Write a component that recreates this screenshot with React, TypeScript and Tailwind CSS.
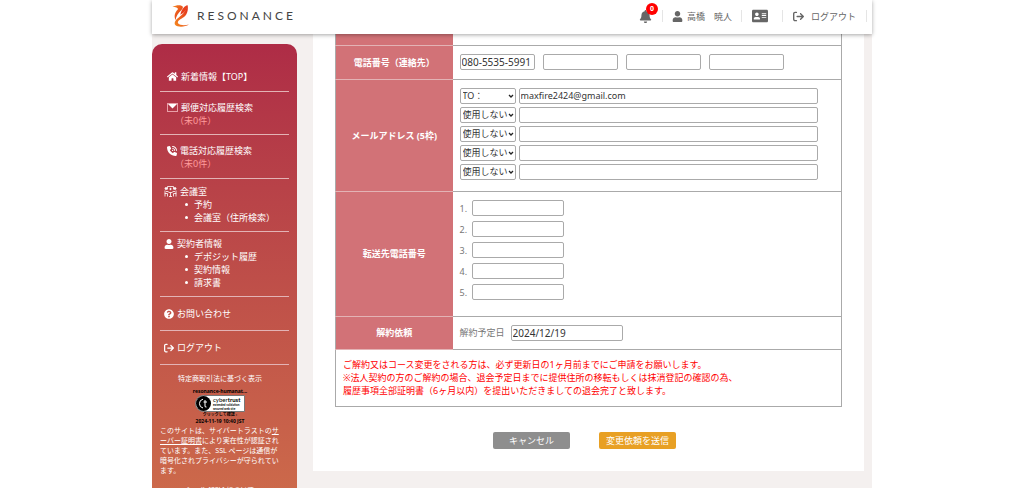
import type { ReactNode } from "react"
import { FaAddressCard, FaBell, FaHome, FaQuestionCircle, FaUser } from "react-icons/fa"
import { FaArrowRightFromBracket, FaPhoneVolume } from "react-icons/fa6"

const subLinks = {
  meeting: ["予約", "会議室（住所検索）"],
  contractor: ["デポジット履歴", "契約情報", "請求書"],
}

const mails = [
  { type: "TO：", address: "maxfire2424@gmail.com" },
  { type: "使用しない", address: "" },
  { type: "使用しない", address: "" },
  { type: "使用しない", address: "" },
  { type: "使用しない", address: "" },
]

const inputClass = "h-4 rounded-xs border border-[#aaa] bg-white text-[#333]"

function Logo() {
  return (
    <a href="#" className="flex items-center gap-[7px]" aria-label="RESONANCE">
      <svg width="18" height="22" viewBox="0 0 52 64">
        <defs>
          <linearGradient id="flameTop" x1="0" y1="0" x2="1" y2="1">
            <stop offset="0" stopColor="#f58a1f" />
            <stop offset="1" stopColor="#e0261c" />
          </linearGradient>
          <linearGradient id="flameBottom" x1="1" y1="0" x2="0" y2="1">
            <stop offset="0" stopColor="#e0261c" />
            <stop offset="1" stopColor="#f58a1f" />
          </linearGradient>
        </defs>
        <path d="M1 6C10 1 20 0 27 2C34 4 32 10 26 16C18 24 12 32 10 44C5 32 8 22 16 14C20 10 12 5 1 6Z" fill="url(#flameTop)" />
        <path d="M45 0C48 16 44 30 30 38C22 43 14 48 18 54C23 60 38 60 49 57C40 63 26 64 16 62C4 59 6 48 15 40C28 30 40 20 45 0Z" fill="url(#flameBottom)" />
        <path d="M45 1C36 2 27 14 24 28C34 24 44 16 45 1Z" fill="#e8401c" />
      </svg>
      <span className="font-[Lato] text-[12px] leading-4 tracking-[3px] text-[#444]">RESONANCE</span>
    </a>
  )
}

function Header() {
  return (
    <header className="relative z-10 flex h-[34px] shrink-0 items-center bg-white pr-[5px] pb-[2px] pl-5 text-[#666] shadow-[0_1px_4px_rgba(0,0,0,0.35)]">
      <Logo />
      <div className="ml-auto flex items-center">
        <button className="relative mr-[10px]" aria-label="お知らせ">
          <FaBell size={13} />
          <span className="absolute -top-[7px] left-[7px] flex size-3 items-center justify-center rounded-full bg-[#f00] text-[7px] leading-3 font-bold text-white">
            0
          </span>
        </button>
        <a href="#" className="flex h-3 items-center gap-1 border-l border-[#e5e5e5] px-[9px]">
          <FaUser size={11} />
          高橋　暁人
        </a>
        <a href="#" className="flex h-3 items-center border-l border-[#e5e5e5] px-[10px]" aria-label="会員証">
          <FaAddressCard size={16} />
        </a>
        <a href="#" className="ml-1 flex h-3 items-center gap-[7px] border-x border-[#e5e5e5] px-[10px]">
          <FaArrowRightFromBracket size={11} />
          ログアウト
        </a>
      </div>
    </header>
  )
}

function MailIcon() {
  return (
    <svg width="11" height="9" viewBox="0 0 11 9" fill="none">
      <rect x=".5" y=".5" width="10" height="8" stroke="#e8a0a8" />
      <path d="M1 1h9L5.500 5.500Z" fill="#fff" />
    </svg>
  )
}

function MeetingIcon() {
  return (
    <svg width="13" height="11" viewBox="0 0 13 11" fill="none" stroke="#fff" strokeWidth=".8">
      <path d="M3.500 3.500V.5h6v3" />
      <circle cx="2" cy="2.500" r="1" fill="#fff" />
      <circle cx="11" cy="2.500" r="1" fill="#fff" />
      <circle cx="6.500" cy="3" r=".7" fill="#fff" />
      <path d="M1 4.500v3h2.500V10.500M12 4.500v3H9.500V10.500M1 7v3.500M12 7v3.500M2 5.500h2.500M11 5.500H8.500M4.500 6.500h4M6.500 6.500v4M5 10.500h3" />
    </svg>
  )
}

function SubMenu({ items }: { items: string[] }) {
  return (
    <ul className="pl-[21px]">
      {items.map((item) => (
        <li key={item} className="flex items-center gap-[6px] before:size-[3px] before:rounded-full before:bg-white">
          <a href="#">{item}</a>
        </li>
      ))}
    </ul>
  )
}

function MenuTitle({ icon, children }: { icon: ReactNode; children: ReactNode }) {
  return (
    <a href="#" className="flex items-center gap-[3px]">
      {icon}
      {children}
    </a>
  )
}

function TrustSeal() {
  return (
    <div className="mx-auto mb-[2px] flex w-[54px] flex-col items-center text-black">
      <span className="text-[5px] leading-[7px] font-bold whitespace-nowrap">resonance-humanat...</span>
      <div className="flex h-[17px] w-[50px] items-center gap-[2px] rounded-l-full border border-[#777] bg-white">
        <svg width="15" height="15" viewBox="0 0 15 15" className="shrink-0">
          <circle cx="7.500" cy="7.500" r="7.500" fill="#000" />
          <path d="M7 3.200A4.500 4.500 0 0 0 7 12M9 4v6q0 1.500 1.500 1M7.500 6h3.500" fill="none" stroke="#fff" />
        </svg>
        <div className="font-[Lato] whitespace-nowrap">
          <div className="text-[6px] leading-[7px]">
            cyber<b>trust</b>
          </div>
          <div className="text-[3px] leading-[4px] font-bold">
            extended validation
            <br />
            secured web site
          </div>
        </div>
      </div>
      <span className="text-[4px] leading-[6px] font-bold whitespace-nowrap">クリックして確認 ›</span>
      <span className="text-[5px] leading-[6px] font-bold whitespace-nowrap">2024-11-19 10:40 JST</span>
    </div>
  )
}

function Sidebar() {
  return (
    <aside className="mt-[10px] h-[720px] w-[145px] shrink-0 rounded-t-[10px] bg-linear-to-b from-[#ae2c46] to-[#dd8a4a] px-2 text-white">
      <nav className="divide-y divide-[#e3b3b5] border-b border-[#e3b3b5] leading-[13px]">
        <div className="px-[7px] pt-[26px] pb-2">
          <MenuTitle icon={<FaHome size={11} />}>新着情報【TOP】</MenuTitle>
        </div>
        <div className="px-[7px] pt-[9px] pb-[7px]">
          <MenuTitle icon={<MailIcon />}>郵便対応履歴検索</MenuTitle>
          <p className="pl-2 text-[#ff9c9c]">（未0件）</p>
        </div>
        <div className="px-[7px] pt-[9px] pb-2">
          <MenuTitle icon={<FaPhoneVolume size={10} />}>電話対応履歴検索</MenuTitle>
          <p className="pl-2 text-[#ff9c9c]">（未0件）</p>
        </div>
        <div className="pt-[6px] pb-[7px] pl-1">
          <MenuTitle icon={<MeetingIcon />}>会議室</MenuTitle>
          <SubMenu items={subLinks.meeting} />
        </div>
        <div className="pt-[5px] pb-[7px] pl-1">
          <MenuTitle icon={<FaUser size={10} />}>契約者情報</MenuTitle>
          <SubMenu items={subLinks.contractor} />
        </div>
        <div className="py-[10px] pl-1">
          <MenuTitle icon={<FaQuestionCircle size={10} />}>お問い合わせ</MenuTitle>
        </div>
        <div className="py-[10px] pl-1">
          <MenuTitle icon={<FaArrowRightFromBracket size={10} />}>ログアウト</MenuTitle>
        </div>
      </nav>
      <div className="pt-[9px] pr-[9px] text-[7px] leading-[10px]">
        <p className="mb-1 text-center">
          <a href="#">特定商取引法に基づく表示</a>
        </p>
        <TrustSeal />
        <p>
          このサイトは、サイバートラストの
          <a href="#" className="underline">
            サーバー証明書
          </a>
          により実在性が認証されています。また、SSL ページは通信が暗号化されプライバシーが守られています。
        </p>
        <p className="pt-[9px] text-center">シール [SSL] について</p>
      </div>
    </aside>
  )
}

function Row({ title, children }: { title: string; children: ReactNode }) {
  return (
    <tr className="border-b border-[#aaa]">
      <th scope="row" className="w-[117px] border-b border-[#e3b3b5] bg-[#d27277] text-center font-bold text-white">
        {title}
      </th>
      <td className="px-[7px] py-2">{children}</td>
    </tr>
  )
}

function ContractForm() {
  return (
    <form className="bg-white px-[22px] pb-[22px]">
      <table className="w-full border-collapse border border-t-0 border-[#aaa]">
        <tbody>
          <tr className="h-[11px] border-b border-[#aaa]">
            <th className="border-b border-[#e3b3b5] bg-[#d27277]" />
            <td />
          </tr>
          <Row title="電話番号（連絡先）">
            <div className="flex h-[17px] items-center gap-2">
              {["080-5535-5991", "", "", ""].map((tel, i) => (
                <input key={i} aria-label={`電話番号${i + 1}`} defaultValue={tel} className={`${inputClass} w-[75px] px-px text-[10px]`} />
              ))}
            </div>
          </Row>
          <Row title="メールアドレス (5枠)">
            <div className="flex flex-col gap-[3px] pb-[3px]">
              {mails.map((mail, i) => (
                <div key={i} className="flex gap-[3px]">
                  <div className="relative">
                    <select aria-label={`種別${i + 1}`} defaultValue={mail.type} className={`${inputClass} w-14 appearance-none px-[2px]`}>
                      <option>{mail.type}</option>
                    </select>
                    <svg className="pointer-events-none absolute top-[6px] right-[2px]" width="6" height="5" viewBox="0 0 6 5">
                      <path d="M1 1l2 2 2-2" fill="none" stroke="#222" strokeWidth="1.300" />
                    </svg>
                  </div>
                  <input type="email" aria-label={`メールアドレス${i + 1}`} defaultValue={mail.address} className={`${inputClass} mr-4 flex-1 px-px`} />
                </div>
              ))}
            </div>
          </Row>
          <Row title="転送先電話番号">
            <div className="flex flex-col gap-1 pb-[7px]">
              {[1, 2, 3, 4, 5].map((n) => (
                <label key={n} className="flex h-[17px] items-center">
                  <span className="w-3">{n}.</span>
                  <input className={`${inputClass} w-[92px] px-px`} />
                </label>
              ))}
            </div>
          </Row>
          <Row title="解約依頼">
            <label className="flex items-center gap-[6px]">
              解約予定日
              <input defaultValue="2024/12/19" className={`${inputClass} w-28 px-px text-[10px]`} />
            </label>
          </Row>
          <tr>
            <td colSpan={2} className="px-[7px] pt-2 pb-[9px] text-[#f00]">
              ご解約又はコース変更をされる方は、必ず更新日の1ヶ月前までにご申請をお願いします。
              <br />
              ※法人契約の方のご解約の場合、退会予定日までに提供住所の移転もしくは抹消登記の確認の為、
              <br />
              履歴事項全部証明書（6ヶ月以内）を提出いただきましての退会完了と致します。
            </td>
          </tr>
        </tbody>
      </table>
      <div className="mt-[25px] flex justify-center gap-[29px] pr-2 text-white">
        <button type="button" className="h-[17px] w-[77px] rounded-xs bg-[#8e8e8e]">
          キャンセル
        </button>
        <button type="submit" className="h-[17px] w-[77px] rounded-xs bg-[#e8a024]">
          変更依頼を送信
        </button>
      </div>
    </form>
  )
}

export default function App() {
  return (
    <div className="h-screen overflow-hidden bg-white font-['Noto_Sans','Noto_Sans_CJK_JP',sans-serif] text-[9px] leading-[13px] text-[#777]">
      <div className="mx-auto flex h-full max-w-[720px] flex-col bg-[#f4f0ef]">
        <Header />
        <div className="flex items-start gap-4 overflow-hidden pr-2">
          <Sidebar />
          <main className="min-w-0 flex-1">
            <ContractForm />
          </main>
        </div>
      </div>
    </div>
  )
}
